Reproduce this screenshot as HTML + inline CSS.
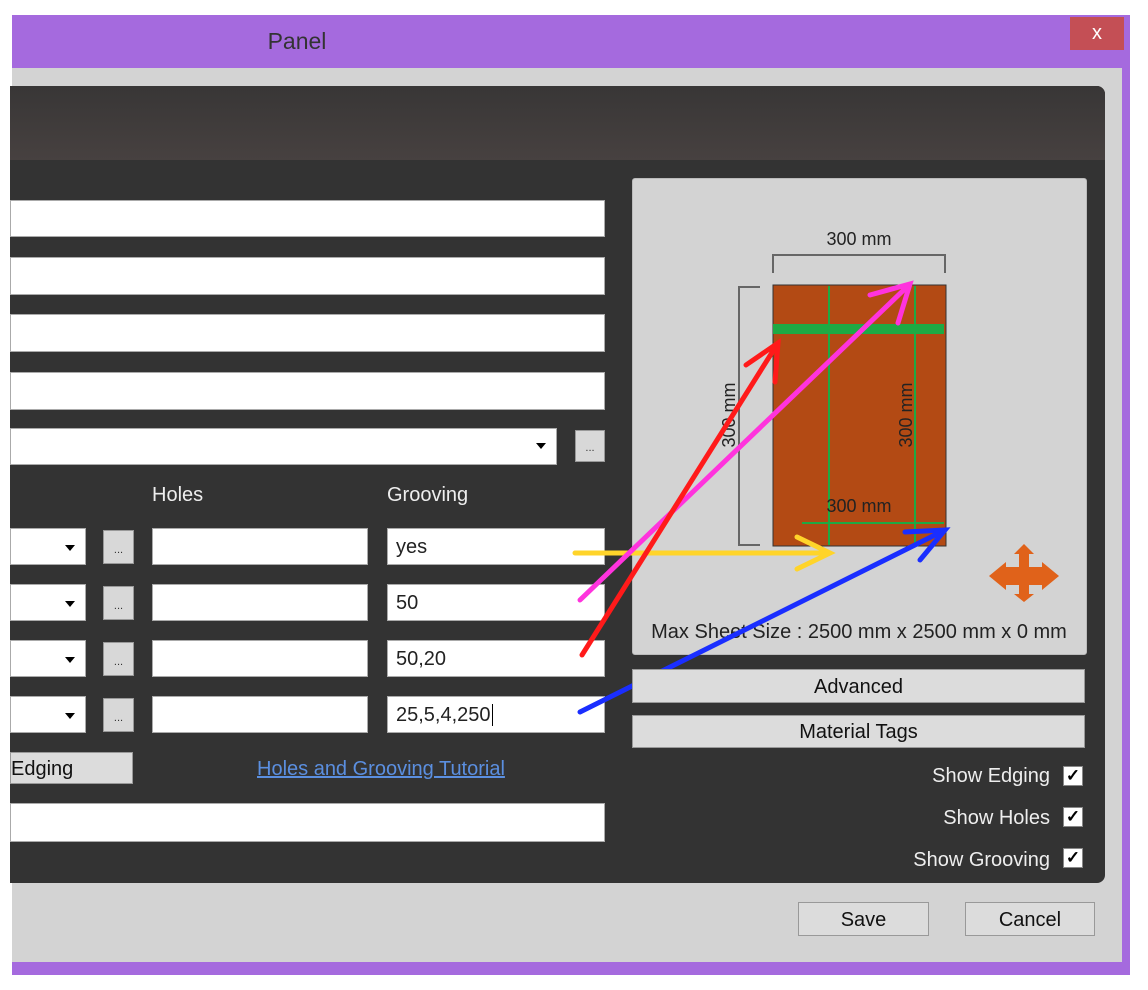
<!DOCTYPE html>
<html><head><meta charset="utf-8"><style>
*{margin:0;padding:0;box-sizing:border-box}
body{width:1148px;height:990px;background:#fff;position:relative;overflow:hidden;font-family:"Liberation Sans",sans-serif;font-size:20px}
div{position:absolute}
.in{background:#fff;border:1px solid #aaa}
.btn{background:#dcdcdc;border:1px solid #999;color:#111;text-align:center}
.dd{background:#d8d8d8;border:1px solid #999;font-size:11px;text-align:center;line-height:26px;color:#333}
.arr{width:0;height:0;border-left:5px solid transparent;border-right:5px solid transparent;border-top:6px solid #000}
.t{color:#222;font-size:20px;padding-left:8px}
.lbl{color:#eee;font-size:20px}
.cb{width:20px;height:20px;background:#fff;border:1px solid #888;color:#000;font-size:17px;line-height:18px;text-align:center;font-weight:bold}
</style></head><body>
<div style="left:12px;top:15px;width:1118px;height:960px;background:#a56ade"></div>
<div style="left:12px;top:28px;width:570px;text-align:center;font-size:23px;color:#333">Panel</div>
<div style="left:1070px;top:17px;width:54px;height:33px;background:#c44f55;color:#fff;text-align:center;font-size:20px;line-height:33px">x</div>
<div style="left:12px;top:68px;width:1110px;height:894px;background:#d3d3d3"></div>
<div style="left:10px;top:86px;width:1095px;height:797px;background:#333;border-radius:0 8px 8px 0"></div>
<div style="left:10px;top:86px;width:1095px;height:74px;background:linear-gradient(#383636,#474140);border-radius:0 8px 0 0"></div>

<div class="in" style="left:10px;top:200px;width:595px;height:37px"></div>
<div class="in" style="left:10px;top:257px;width:595px;height:38px"></div>
<div class="in" style="left:10px;top:314px;width:595px;height:38px"></div>
<div class="in" style="left:10px;top:372px;width:595px;height:38px"></div>
<div class="in" style="left:10px;top:428px;width:547px;height:37px"></div>
<div class="arr" style="left:536px;top:443px"></div>
<div class="dd" style="left:575px;top:430px;width:30px;height:32px;line-height:34px">...</div>

<div class="lbl" style="left:152px;top:484px">Holes</div>
<div class="lbl" style="left:387px;top:484px">Grooving</div>

<div class="in" style="left:10px;top:528px;width:76px;height:37px"></div><div class="arr" style="left:65px;top:545px"></div>
<div class="dd" style="left:103px;top:530px;width:31px;height:34px;line-height:38px">...</div>
<div class="in" style="left:152px;top:528px;width:216px;height:37px"></div>
<div class="in t" style="left:387px;top:528px;width:218px;height:37px;line-height:36px">yes</div>

<div class="in" style="left:10px;top:584px;width:76px;height:37px"></div><div class="arr" style="left:65px;top:601px"></div>
<div class="dd" style="left:103px;top:586px;width:31px;height:34px;line-height:38px">...</div>
<div class="in" style="left:152px;top:584px;width:216px;height:37px"></div>
<div class="in t" style="left:387px;top:584px;width:218px;height:37px;line-height:36px">50</div>

<div class="in" style="left:10px;top:640px;width:76px;height:37px"></div><div class="arr" style="left:65px;top:657px"></div>
<div class="dd" style="left:103px;top:642px;width:31px;height:34px;line-height:38px">...</div>
<div class="in" style="left:152px;top:640px;width:216px;height:37px"></div>
<div class="in t" style="left:387px;top:640px;width:218px;height:37px;line-height:36px">50,20</div>

<div class="in" style="left:10px;top:696px;width:76px;height:37px"></div><div class="arr" style="left:65px;top:713px"></div>
<div class="dd" style="left:103px;top:698px;width:31px;height:34px;line-height:38px">...</div>
<div class="in" style="left:152px;top:696px;width:216px;height:37px"></div>
<div class="in t" style="left:387px;top:696px;width:218px;height:37px;line-height:36px">25,5,4,250<span style="border-left:1px solid #000;margin-left:1px"></span></div>

<div class="btn" style="left:10px;top:752px;width:123px;height:32px;line-height:32px;text-align:left">Edging</div>
<div style="left:257px;top:758px;color:#5b8fe0;text-decoration:underline">Holes and Grooving Tutorial</div>
<div class="in" style="left:10px;top:803px;width:595px;height:39px"></div>

<div style="left:632px;top:178px;width:455px;height:477px;background:#d3d3d3;border:1px solid #bbb;border-radius:3px"></div>
<svg style="position:absolute;left:0;top:0" width="1148" height="990">
<g font-family="Liberation Sans,sans-serif" font-size="18" fill="#222">
<text x="859" y="245" text-anchor="middle">300 mm</text>
<path d="M773 273V255H945V273" stroke="#666" stroke-width="2" fill="none"/>
<path d="M760 287H739V545H760" stroke="#666" stroke-width="2" fill="none"/>
<rect x="773" y="285" width="173" height="261" fill="#b34a14" stroke="#333"/>
<rect x="773" y="324" width="171" height="10" fill="#1eaa44"/>
<line x1="829" y1="286" x2="829" y2="545" stroke="#1eaa44" stroke-width="2"/>
<line x1="915" y1="286" x2="915" y2="545" stroke="#1eaa44" stroke-width="2"/>
<line x1="802" y1="523" x2="944" y2="523" stroke="#1eaa44" stroke-width="2"/>
<text transform="translate(735,415) rotate(-90)" text-anchor="middle">300 mm</text>
<text transform="translate(912,415) rotate(-90)" text-anchor="middle">300 mm</text>
<text x="859" y="512" text-anchor="middle">300 mm</text>
<text x="859" y="638" text-anchor="middle" font-size="20">Max Sheet Size : 2500 mm x 2500 mm x 0 mm</text>
</g>
<g transform="translate(1024,572)">
<path d="M0,-28 L10,-18 L5,-18 L5,-5 L18,-5 L18,-10 L35,4 L18,18 L18,13 L5,13 L5,22 L10,22 L0,30 L-10,22 L-5,22 L-5,13 L-18,13 L-18,18 L-35,4 L-18,-10 L-18,-5 L-5,-5 L-5,-18 L-10,-18Z" fill="#e0621a"/>
</g>
<g stroke-width="5" fill="none" stroke-linecap="round">
<path d="M575 553H830M797 537L830 553L797 569" stroke="#ffd42a"/>
<path d="M580 600L910 284M870 295L910 284L898 323" stroke="#ff33dd"/>
<path d="M582 655L778 343M746 365L778 343L775 382" stroke="#ff1a1a"/>
<path d="M580 712L945 530M905 532L945 530L920 560" stroke="#1a2eff"/>
</g>
</svg>

<div class="btn" style="left:632px;top:669px;width:453px;height:34px;line-height:34px">Advanced</div>
<div class="btn" style="left:632px;top:715px;width:453px;height:33px;line-height:33px">Material Tags</div>
<div class="lbl" style="left:850px;top:765px;width:200px;text-align:right">Show Edging</div>
<div class="cb" style="left:1063px;top:766px">✓</div>
<div class="lbl" style="left:850px;top:807px;width:200px;text-align:right">Show Holes</div>
<div class="cb" style="left:1063px;top:807px">✓</div>
<div class="lbl" style="left:850px;top:849px;width:200px;text-align:right">Show Grooving</div>
<div class="cb" style="left:1063px;top:848px">✓</div>

<div class="btn" style="left:798px;top:902px;width:131px;height:34px;line-height:34px">Save</div>
<div class="btn" style="left:965px;top:902px;width:130px;height:34px;line-height:34px">Cancel</div>
</body></html>
